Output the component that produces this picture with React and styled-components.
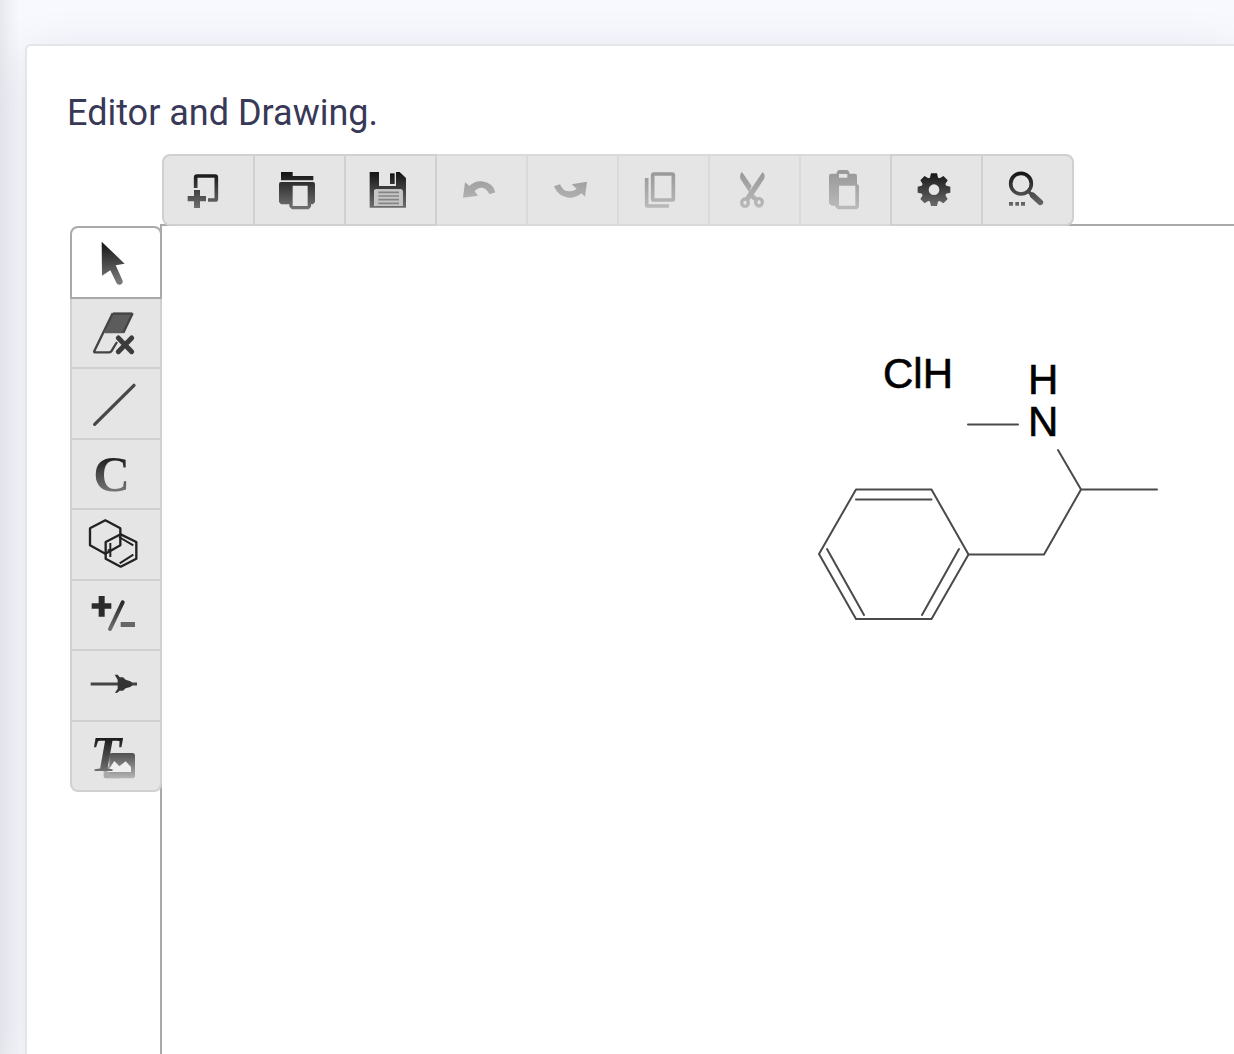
import React from "react";
import styled, { createGlobalStyle } from "styled-components";

const GlobalStyle = createGlobalStyle`
  *, *::before, *::after { box-sizing: border-box; }
  body {
    margin: 0;
    overflow: hidden;
    font-family: Roboto, "Liberation Sans", sans-serif;
    background: #f8f9ff;
  }
`;

const Page = styled.div`
  display: flex;
  height: 100vh;
  padding: 44px 0 0 25px;
  background: linear-gradient(90deg, #00000012, #00000008 10px, #00000000 20px);
`;

const Card = styled.main`
  display: flex;
  flex: 1;
  flex-direction: column;
  padding: 43px 0 0 40px;
  border: 2px solid #e5e5e7;
  border-width: 2px 0 0 2px;
  border-radius: 6px 0 0 0;
  background: #fff;
  box-shadow: 0 12px 52px #1c1c301c;
`;

const Title = styled.h1`
  margin: 0;
  color: #383857;
  font-size: 36px;
  font-weight: 400;
  line-height: 48px;
`;

const Editor = styled.section`
  display: grid;
  flex: 1;
  grid-template-columns: 92px 1fr;
  grid-template-rows: 72px 1fr;
  padding: 17px 0 0 3px;
`;

const Toolbar = styled.div`
  z-index: 1;
  display: flex;
  grid-column: 2;
  justify-self: start;
`;

const Rail = styled.div`
  z-index: 1;
  display: grid;
  grid-template-rows: 73px repeat(7, 1fr);
  align-self: start;
  height: 566px;
`;

const ToolButton = styled.button`
  display: flex;
  align-items: center;
  margin: 0;
  padding: 0;
  border: 2px solid ${(p) => (p.disabled ? "#dadada" : "#d0d0d0")};
  background: #e5e5e5;
`;

const TopButton = styled(ToolButton)`
  z-index: ${(p) => (p.disabled ? 0 : 1)};
  width: 93px;
  height: 72px;
  padding-left: 21px;

  & + & { margin-left: -2px; }
  &:first-child { border-radius: 8px 0 0 8px; }
  &:last-child { border-radius: 0 8px 8px 0; }
`;

const SideButton = styled(ToolButton)`
  z-index: ${(p) => (p.$active ? 1 : 0)};
  padding-left: 17px;
  border-color: ${(p) => (p.$active ? "#a9a9a9" : "#d0d0d0")};
  background: ${(p) => (p.$active ? "#fff" : "#e5e5e5")};

  & + & { margin-top: -2px; }
  &:first-child { border-radius: 8px 8px 0 0; }
  &:last-child { border-radius: 0 0 8px 8px; }
`;

const Canvas = styled.div`
  margin: -2px 0 0 -2px;
  border: 2px solid #a9a9a9;
  border-width: 2px 0 0 2px;
  background: #fff;
`;

const Structure = styled.svg`
  display: block;
  width: 100%;
  height: 100%;
`;

const Bonds = styled.g`
  fill: none;
  stroke: #4a4a4a;
  stroke-width: 2;
  stroke-linecap: round;
  stroke-linejoin: round;
`;

const Atom = styled.text`
  fill: #000;
  stroke: #000;
  stroke-width: 0.6px;
  font-family: "Liberation Sans", Arial, sans-serif;
  font-size: 42px;
`;

const Glyph = styled.svg`
  display: block;
  flex: none;
  overflow: visible;
  width: ${(p) => p.$size}px;
  height: ${(p) => p.$size}px;
  opacity: ${(p) => (p.$faded ? 0.36 : 1)};
`;

const Letter = styled.text`
  font-family: "Liberation Serif", "Times New Roman", serif;
  font-size: 153px;
  font-weight: 700;
  font-style: ${(p) => (p.$italic ? "italic" : "normal")};
`;

const INK = "url(#ink)";

const icons = {
  create: (
    <>
      <path d="M32 66V34Q32 30 36 30H90Q94 30 94 34V98Q94 102 90 102H69" fill="none" stroke={INK} strokeWidth="11" />
      <path d="M27 72H45V90H63V106H45V126H27V106H8V90H27Z" fill={INK} />
    </>
  ),
  open: (
    <>
      <path d="M15 18H50V30H112V43H15Z" fill={INK} />
      <path
        fillRule="evenodd"
        fill={INK}
        d="M15 48H111Q117 48 117 54V108L111 115H105V122L98 130H48L40 122V115H15L9 108V54Q9 48 15 48ZM50 59V120H95V59Z"
      />
    </>
  ),
  save: (
    <>
      <path fillRule="evenodd" fill={INK} d="M8 18H36V60H87V18H98L117 36V125H8ZM21 76V120H107V76Q107 70 101 70H27Q21 70 21 76Z" />
      <path d="M69 22H83V54H69Z" fill={INK} />
      <rect x="21" y="71" width="86" height="49" rx="5" fill="#c6c6c6" />
      <path d="M34 79H96M34 90H96M34 101H96M34 112H96" stroke="#858585" strokeWidth="5" />
    </>
  ),
  undo: <path fill={INK} d="M15 95L21 49L34 60Q50 44 72 46Q104 50 112 79L94 85Q88 68 72 65Q59 64 50 76L60 89Z" />,
  redo: <path fill={INK} d="M15 61L33 55Q42 76 58 76Q74 76 83 68L68 55L114 47L108 92L97 82Q80 97 57 95Q28 92 15 61Z" />,
  copy: (
    <g fill="none" stroke={INK} strokeWidth="11">
      <rect x="38" y="24" width="62" height="78" rx="4" />
      <path d="M20 36V116Q20 120 24 120H87" />
    </g>
  ),
  cut: (
    <>
      <path fill={INK} d="M33 18L62 60L54 78L28 38Q25 24 33 18ZM95 18Q104 26 99 39L68 86L80 95L70 105L60 97L53 105L42 96L58 72Z" />
      <g fill="none" stroke={INK} strokeWidth="10">
        <ellipse cx="42" cy="110" rx="10" ry="11" />
        <ellipse cx="84" cy="109" rx="10" ry="11" />
      </g>
    </>
  ),
  paste: (
    <path
      fillRule="evenodd"
      fill={INK}
      d="M44 23V18L50 12H76L82 18V23H99Q105 23 105 29V53L111 59V123L105 130H47L40 123V119H29L21 112V30Q21 23 28 23ZM51 24V35H76V24ZM51 59V119H100V59Z"
    />
  ),
  settings: (
    <>
      <circle cx="63" cy="71" r="27" fill="none" stroke={INK} strokeWidth="22" />
      <g fill={INK}>
        {[0, 45, 90, 135, 180, 225, 270, 315].map((angle) => {
          const a = (angle * Math.PI) / 180;
          const at = (radius, side) =>
            `${63 + radius * Math.cos(a) - side * Math.sin(a)} ${71 + radius * Math.sin(a) + side * Math.cos(a)}`;
          return <path key={angle} d={`M${at(32, -13)}L${at(49, -9)}L${at(49, 9)}L${at(32, 13)}Z`} />;
        })}
      </g>
    </>
  ),
  search: (
    <>
      <circle cx="51" cy="53" r="31" fill="none" stroke={INK} strokeWidth="11" />
      <path d="M73 76L84 87" stroke={INK} strokeWidth="10" />
      <path d="M86 88L109 109" stroke={INK} strokeWidth="17" strokeLinecap="round" />
      <path d="M15 108H27V119H15ZM34 108H45V119H34ZM51 108H63V119H51Z" fill={INK} />
    </>
  ),
  select: (
    <path fill={INK} d="M38 17L107 83L80 88L101 134Q102 144 93 146Q86 148 82 140L64 103L39 119Z" />
  ),
  erase: (
    <>
      <path d="M71 20H132L103 82H46Z" fill="#5c5c5c" />
      <path d="M72 23H129M71 22L16 135Q14 139 18 139H60Q66 139 70 131L84 108M131 22L103 80" fill="none" stroke="#444" strokeWidth="7" />
      <path d="M88 96L128 137M128 96L88 137" stroke="#3c3c3c" strokeWidth="15" strokeLinecap="round" />
    </>
  ),
  bond: <path d="M17 142L135 25" stroke="#484848" strokeWidth="10" strokeLinecap="round" />,
  atom: <Letter x="13" y="132" fill={INK}>C</Letter>,
  template: (
    <g fill="none" stroke="#222" strokeWidth="7" strokeLinejoin="round">
      <path d="M49 10L94 34V85L49 110L3 85V34Z" />
      <path d="M95 52L142 75V125L95 149L50 125V75Z" />
      <path d="M90 60L133 85M92 139L133 113M64 78V120" strokeWidth="6" />
      <path d="M56 99H72" strokeWidth="5" />
    </g>
  ),
  charge: (
    <>
      <path d="M29 24H47V46H67V62H47V86H29V62H8V46H29Z" fill="#2b2b2b" />
      <path d="M101 43L63 123" stroke={INK} strokeWidth="12" strokeLinecap="round" />
      <path d="M95 102H138V117H95Z" fill="#666" />
    </>
  ),
  arrow: (
    <>
      <path d="M5 78H144" stroke="#444" strokeWidth="9" />
      <path d="M77 50L86 50L92 58H102L110 65L124 70L130 75V82L124 87L110 91L102 98H92L84 105L78 104L86 92V65Z" fill="#333" />
    </>
  ),
  text: (
    <>
      <rect x="44" y="110" width="50" height="38" rx="8" fill="#aaa" />
      <rect x="61" y="72" width="77" height="76" rx="8" fill="url(#fade)" />
      <path d="M55 128L76 96L91 112L110 97L126 114V129H55Z" fill="#efefef" />
      <Letter $italic x="4" y="126" fill={INK}>T</Letter>
    </>
  ),
};

function Icon({ name, extent, faded }) {
  return (
    <Glyph $size={extent / 3} $faded={faded} viewBox={`0 0 ${extent} ${extent}`} aria-hidden="true">
      {icons[name]}
    </Glyph>
  );
}

const topTools = [
  { icon: "create", label: "New" },
  { icon: "open", label: "Open" },
  { icon: "save", label: "Save" },
  { icon: "undo", label: "Undo", disabled: true },
  { icon: "redo", label: "Redo", disabled: true },
  { icon: "copy", label: "Copy", disabled: true },
  { icon: "cut", label: "Cut", disabled: true },
  { icon: "paste", label: "Paste", disabled: true },
  { icon: "settings", label: "Settings" },
  { icon: "search", label: "Search" },
];

const sideTools = [
  { icon: "select", label: "Select", active: true },
  { icon: "erase", label: "Erase" },
  { icon: "bond", label: "Bond" },
  { icon: "atom", label: "Carbon" },
  { icon: "template", label: "Templates" },
  { icon: "charge", label: "Charge" },
  { icon: "arrow", label: "Reaction arrow" },
  { icon: "text", label: "Text and image" },
];

const HiddenDefs = styled.svg`
  position: absolute;
`;

function Gradients() {
  return (
    <HiddenDefs width="0" height="0" aria-hidden="true">
      <defs>
        <linearGradient id="ink" gradientUnits="userSpaceOnUse" x1="0" y1="20" x2="0" y2="135">
          <stop offset="0" stopColor="#151515" />
          <stop offset="1" stopColor="#777" />
        </linearGradient>
        <linearGradient id="fade" x1="0" y1="0" x2="0" y2="1">
          <stop offset="0" stopColor="#505050" />
          <stop offset="1" stopColor="#b5b5b5" />
        </linearGradient>
      </defs>
    </HiddenDefs>
  );
}

export default function App() {
  return (
    <Page>
      <GlobalStyle />
      <Gradients />
      <Card>
        <Title>Editor and Drawing.</Title>
        <Editor>
          <Toolbar role="toolbar" aria-label="File and edit">
            {topTools.map((t) => (
              <TopButton key={t.icon} type="button" disabled={t.disabled} aria-label={t.label}>
                <Icon name={t.icon} extent={144} faded={t.disabled} />
              </TopButton>
            ))}
          </Toolbar>
          <Rail role="toolbar" aria-label="Drawing tools">
            {sideTools.map((t) => (
              <SideButton key={t.icon} type="button" $active={t.active} aria-label={t.label} aria-pressed={!!t.active}>
                <Icon name={t.icon} extent={162} />
              </SideButton>
            ))}
          </Rail>
          <Canvas>
            <Structure role="img" aria-label="Molecule">
              <Bonds transform="translate(656 124)">
                <path d="M1 204L38 139.500H113.500L150.500 204.500L113.500 269H38Z" />
                <path d="M38 149.500H113.500M9 199L46 265M141 199L104 265" />
                <path d="M150.500 204.500H226L263 139.500H339M263 139.500L240 100" />
                <path d="M150 74.500H200" />
              </Bonds>
              <Atom x="721" y="162">ClH</Atom>
              <Atom>
                <tspan x="866" y="168">H</tspan>
                <tspan x="866" y="210">N</tspan>
              </Atom>
            </Structure>
          </Canvas>
        </Editor>
      </Card>
    </Page>
  );
}
